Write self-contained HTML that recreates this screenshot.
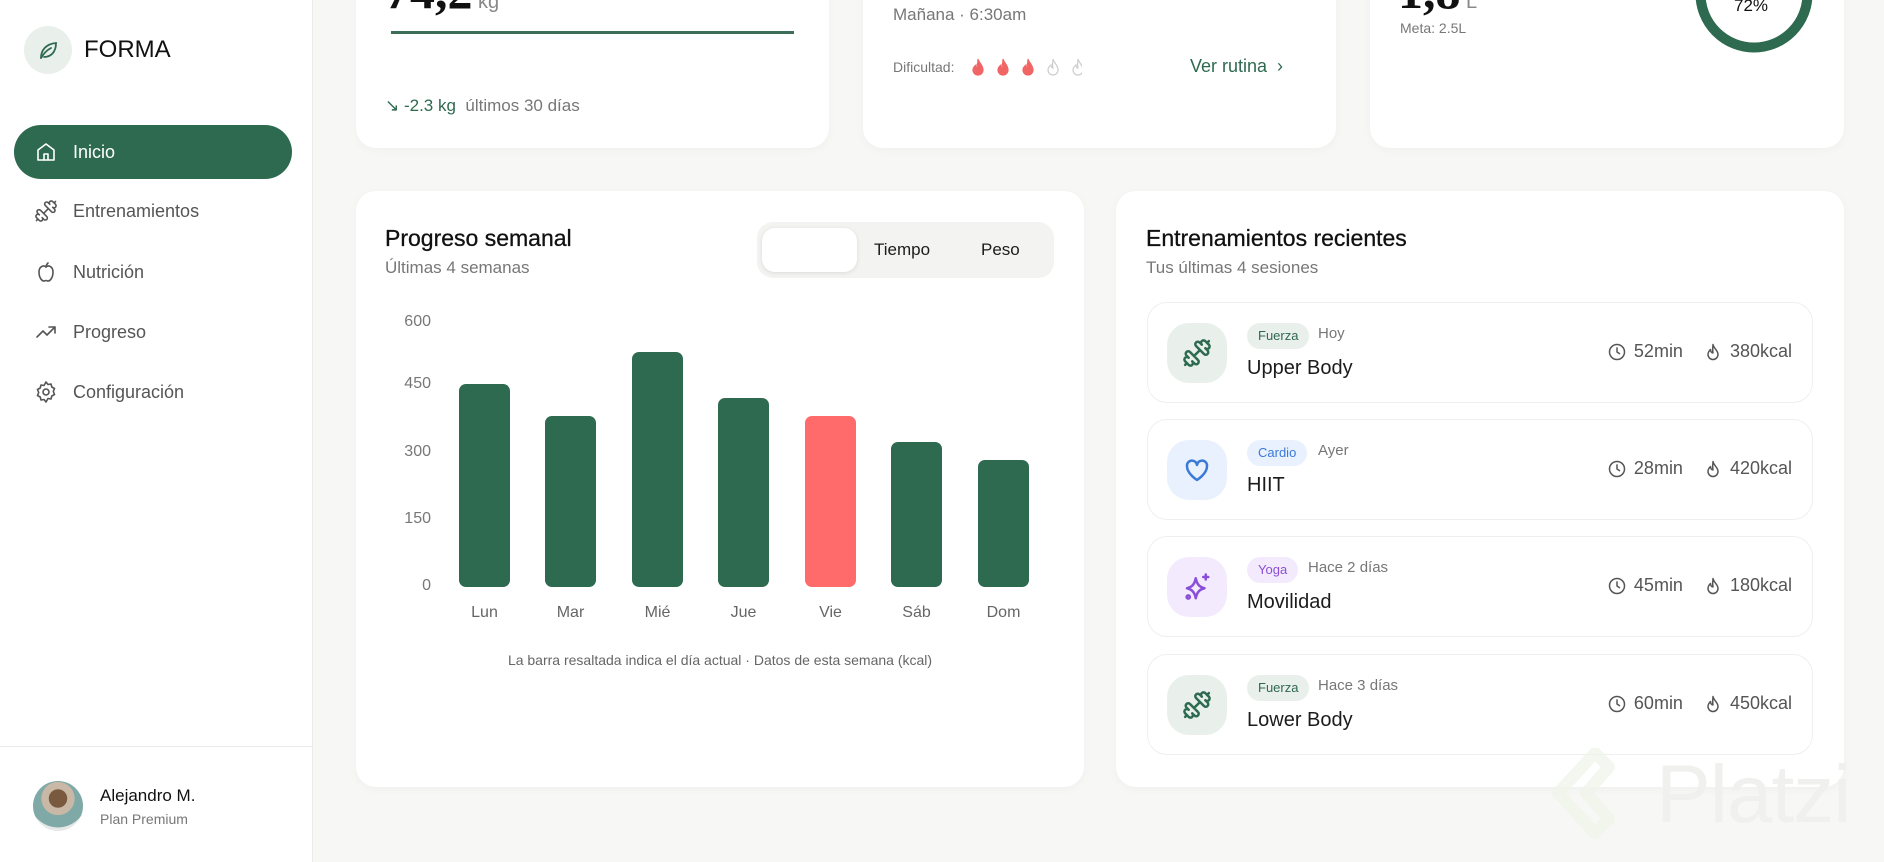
<!DOCTYPE html>
<html><head><meta charset="utf-8">
<style>
*{box-sizing:border-box;margin:0;padding:0}
body{width:1884px;height:862px;overflow:hidden;background:#f7f7f5;font-family:"Liberation Sans",sans-serif;color:#1c1c1c;position:relative}
.a{position:absolute}
.side{left:0;top:0;width:313px;height:862px;background:#fff;border-right:1px solid #ebebea}
.card{background:#fff;border-radius:20px;box-shadow:0 2px 10px rgba(0,0,0,.035)}
.nav{left:14px;width:278px;height:54px;border-radius:27px;display:flex;align-items:center;padding-left:20px;font-size:18px;color:#555}
.nav svg{width:24px;height:24px;margin-right:15px;fill:none;stroke:currentColor;stroke-width:1.6;stroke-linecap:round;stroke-linejoin:round}
.fl{transform:scaleX(-1)}
.grey{color:#777}
.bar{position:absolute;width:51px;bottom:275px;background:#2e6a50;border-radius:7px}
.yl{position:absolute;left:380px;width:51px;text-align:right;font-size:16px;color:#777}
.xl{position:absolute;top:604px;width:51px;text-align:center;font-size:16px;color:#666}
.row{position:absolute;left:1147px;width:666px;height:101px;border:1px solid #efefed;border-radius:20px;background:#fff}
.ic{position:absolute;left:19px;top:20px;width:60px;height:60px;border-radius:22px;display:flex;align-items:center;justify-content:center}
.ic svg{width:30px;height:30px;fill:none;stroke-width:2;stroke-linecap:round;stroke-linejoin:round}
.tag{position:absolute;left:99px;top:20px;height:26px;padding:0 11px;border-radius:13px;font-size:13px;line-height:26px}
.when{position:absolute;top:22px;font-size:15px;color:#777}
.tt{position:absolute;left:99px;top:54px;font-size:20px;color:#1c1c1c}
.st{position:absolute;top:38px;right:20px;font-size:18px;color:#555;display:flex;align-items:center}
.st svg{width:20px;height:20px;fill:none;stroke:#555;stroke-width:1.8;stroke-linecap:round;stroke-linejoin:round;margin-right:7px}
</style></head><body>
<div class="a side"></div>
<div class="a" style="left:24px;top:26px;width:48px;height:48px;border-radius:50%;background:#e9efeb"></div>
<svg class="a" style="left:36px;top:38px" width="24" height="24" viewBox="0 0 24 24" fill="none" stroke="#2e6a50" stroke-width="1.8" stroke-linecap="round"><path d="M5 20c0-8 5-14 15-15 0 9-5 14-12 14"/><path d="M5 20c3-5 6-8 10-10"/></svg>
<div class="a" style="left:84px;top:36px;font-size:24px;font-weight:500;color:#111">FORMA</div>

<div class="a nav" style="top:125px;background:#2e6a50;color:#fff"><svg viewBox="0 0 24 24"><path d="M4 10l8-6 8 6v10H4z"/><path d="M10 20v-6h4v6"/></svg>Inicio</div>
<div class="a nav" style="top:184px"><svg class="fl" viewBox="0 0 24 24"><path d="M14.4 14.4 9.6 9.6M18.657 21.485a2 2 0 1 1-2.829-2.828l-1.767 1.768a2 2 0 1 1-2.829-2.829l6.364-6.364a2 2 0 1 1 2.829 2.829l-1.768 1.767a2 2 0 1 1 2.828 2.829zM21.5 21.5l-1.4-1.4M3.9 3.9 2.5 2.5M6.404 12.768a2 2 0 1 1-2.829-2.829l1.768-1.767a2 2 0 1 1-2.828-2.829l2.828-2.828a2 2 0 1 1 2.829 2.828l1.767-1.768a2 2 0 1 1 2.829 2.829z"/></svg>Entrenamientos</div>
<div class="a nav" style="top:245px"><svg viewBox="0 0 24 24"><path d="M12 7c-2-2-7-1-7 5s3 9 5 9c1 0 1-.5 2-.5s1 .5 2 .5c2 0 5-3 5-9s-5-7-7-5z"/><path d="M12 7c0-2 1-3 2-4"/></svg>Nutrición</div>
<div class="a nav" style="top:305px"><svg viewBox="0 0 24 24"><path d="M3 17l6-6 4 4 8-8M15 7h6v6"/></svg>Progreso</div>
<div class="a nav" style="top:365px"><svg viewBox="0 0 24 24"><circle cx="12" cy="12" r="3"/><path d="M12 2l2 2.5 3-.5.8 3 2.7 1.5-1.2 3 1.2 3-2.7 1.5-.8 3-3-.5L12 22l-2-2.5-3 .5-.8-3-2.7-1.5 1.2-3-1.2-3 2.7-1.5.8-3 3 .5z"/></svg>Configuración</div>

<div class="a" style="left:0;top:746px;width:312px;height:1px;background:#ebebea"></div>
<div class="a" style="left:33px;top:781px;width:50px;height:50px;border-radius:50%;background:radial-gradient(circle at 50% 35%,#7a5a3e 0 22%,#c9b8a6 23% 40%,#7fa9a6 41% 70%,#e6e8e8 71%)"></div>
<div class="a" style="left:100px;top:786px;font-size:17px;color:#111">Alejandro M.</div>
<div class="a grey" style="left:100px;top:811px;font-size:14px">Plan Premium</div>

<div class="a card" style="left:356px;top:-30px;width:473px;height:178px"></div>
<div class="a" style="left:385px;top:-38px;font-family:'Liberation Serif',serif;font-size:50px;font-weight:bold;color:#111">74,2<span style="font-size:20px;font-weight:normal;color:#888;font-family:'Liberation Sans'"> kg</span></div>
<div class="a" style="left:391px;top:31px;width:403px;height:3px;background:#3d6e58"></div>
<div class="a" style="left:385px;top:96px;font-size:17px;color:#2e6a50">↘ -2.3 kg <span style="color:#777">&nbsp;últimos 30 días</span></div>

<div class="a card" style="left:863px;top:-30px;width:473px;height:178px"></div>
<div class="a grey" style="left:893px;top:5px;font-size:17px">Mañana · 6:30am</div>
<div class="a grey" style="left:893px;top:59px;font-size:14px">Dificultad:</div>
<svg class="a" style="left:972px;top:56px" width="110" height="22" viewBox="0 0 110 22"><g stroke-width="1.2"><path d="M6 3c1 4 5 6 5 11a5 5 0 0 1-10 0c0-3 2-4 3-5 0 2 1 3 2 3-1-3 0-6 0-9z" fill="#f06565" stroke="#f06565"/><path transform="translate(25 0)" d="M6 3c1 4 5 6 5 11a5 5 0 0 1-10 0c0-3 2-4 3-5 0 2 1 3 2 3-1-3 0-6 0-9z" fill="#f06565" stroke="#f06565"/><path transform="translate(50 0)" d="M6 3c1 4 5 6 5 11a5 5 0 0 1-10 0c0-3 2-4 3-5 0 2 1 3 2 3-1-3 0-6 0-9z" fill="#f06565" stroke="#f06565"/><path transform="translate(75 0)" d="M6 3c1 4 5 6 5 11a5 5 0 0 1-10 0c0-3 2-4 3-5 0 2 1 3 2 3-1-3 0-6 0-9z" fill="none" stroke="#ccc"/><path transform="translate(100 0)" d="M6 3c1 4 5 6 5 11a5 5 0 0 1-10 0c0-3 2-4 3-5 0 2 1 3 2 3-1-3 0-6 0-9z" fill="none" stroke="#ccc"/></g></svg>
<div class="a" style="left:1190px;top:56px;font-size:18px;color:#2e6a50">Ver rutina &nbsp;›</div>

<div class="a card" style="left:1370px;top:-30px;width:474px;height:178px"></div>
<div class="a" style="left:1398px;top:-38px;font-family:'Liberation Serif',serif;font-size:50px;font-weight:bold;color:#111">1,8<span style="font-size:20px;font-weight:normal;color:#888;font-family:'Liberation Sans'"> L</span></div>
<div class="a grey" style="left:1400px;top:20px;font-size:14px">Meta: 2.5L</div>
<svg class="a" style="left:1690px;top:-70px" width="128" height="128"><circle cx="64" cy="64" r="53.5" fill="none" stroke="#2e6a50" stroke-width="10"/></svg>
<div class="a" style="left:1734px;top:-4px;font-size:17px;font-weight:500;color:#111">72%</div>

<div class="a card" style="left:356px;top:191px;width:728px;height:596px"></div>
<div class="a" style="left:385px;top:225px;font-size:23px;color:#111;-webkit-text-stroke:.3px #111">Progreso semanal</div>
<div class="a grey" style="left:385px;top:258px;font-size:17px">Últimas 4 semanas</div>
<div class="a" style="left:757px;top:222px;width:297px;height:56px;border-radius:16px;background:#f3f3f1"></div>
<div class="a" style="left:762px;top:228px;width:95px;height:44px;border-radius:13px;background:#fff;box-shadow:0 1px 4px rgba(0,0,0,.1)"></div>
<div class="a" style="left:874px;top:240px;font-size:17px">Tiempo</div>
<div class="a" style="left:981px;top:240px;font-size:17px">Peso</div>
<div class="yl" style="top:313px">600</div>
<div class="yl" style="top:375px">450</div>
<div class="yl" style="top:443px">300</div>
<div class="yl" style="top:510px">150</div>
<div class="yl" style="top:577px">0</div>
<div class="bar" style="left:459px;height:203px"></div>
<div class="bar" style="left:545px;height:171px"></div>
<div class="bar" style="left:632px;height:235px"></div>
<div class="bar" style="left:718px;height:189px"></div>
<div class="bar" style="left:805px;height:171px;background:#ff6b6b"></div>
<div class="bar" style="left:891px;height:145px"></div>
<div class="bar" style="left:978px;height:127px"></div>
<div class="xl" style="left:459px">Lun</div>
<div class="xl" style="left:545px">Mar</div>
<div class="xl" style="left:632px">Mié</div>
<div class="xl" style="left:718px">Jue</div>
<div class="xl" style="left:805px">Vie</div>
<div class="xl" style="left:891px">Sáb</div>
<div class="xl" style="left:978px">Dom</div>
<div class="a" style="left:356px;width:728px;top:652px;text-align:center;font-size:14px;color:#666">La barra resaltada indica el día actual · Datos de esta semana (kcal)</div>

<div class="a card" style="left:1116px;top:191px;width:728px;height:596px"></div>
<div class="a" style="left:1146px;top:225px;font-size:23px;color:#111;-webkit-text-stroke:.3px #111">Entrenamientos recientes</div>
<div class="a grey" style="left:1146px;top:258px;font-size:17px">Tus últimas 4 sesiones</div>

<div class="row" style="top:302px">
<div class="ic" style="background:#e9efeb"><svg class="fl" viewBox="0 0 24 24" stroke="#2e6a50"><path d="M14.4 14.4 9.6 9.6M18.657 21.485a2 2 0 1 1-2.829-2.828l-1.767 1.768a2 2 0 1 1-2.829-2.829l6.364-6.364a2 2 0 1 1 2.829 2.829l-1.768 1.767a2 2 0 1 1 2.828 2.829zM21.5 21.5l-1.4-1.4M3.9 3.9 2.5 2.5M6.404 12.768a2 2 0 1 1-2.829-2.829l1.768-1.767a2 2 0 1 1-2.828-2.829l2.828-2.828a2 2 0 1 1 2.829 2.828l1.767-1.768a2 2 0 1 1 2.829 2.829z"/></svg></div>
<div class="tag" style="background:#e9efeb;color:#2e6a50">Fuerza</div><div class="when" style="left:170px">Hoy</div>
<div class="tt">Upper Body</div>
<div class="st"><svg viewBox="0 0 24 24"><circle cx="12" cy="12" r="9"/><path d="M12 7v5l3 2"/></svg>52min&nbsp;&nbsp;&nbsp;&nbsp;<svg viewBox="0 0 24 24"><path d="M12 3c1 5 6 7 6 12a6 6 0 0 1-12 0c0-3 2-5 3-6 0 2 1 4 3 4-1-4 0-7 0-10z"/></svg>380kcal</div>
</div>
<div class="row" style="top:419px">
<div class="ic" style="background:#e8f1fd"><svg viewBox="0 0 24 24" stroke="#3b7ad9"><path d="M12 20s-8-5-8-11a4 4 0 0 1 8-1 4 4 0 0 1 8 1c0 6-8 11-8 11z"/></svg></div>
<div class="tag" style="background:#e8f1fd;color:#3b7ad9">Cardio</div><div class="when" style="left:170px">Ayer</div>
<div class="tt">HIIT</div>
<div class="st"><svg viewBox="0 0 24 24"><circle cx="12" cy="12" r="9"/><path d="M12 7v5l3 2"/></svg>28min&nbsp;&nbsp;&nbsp;&nbsp;<svg viewBox="0 0 24 24"><path d="M12 3c1 5 6 7 6 12a6 6 0 0 1-12 0c0-3 2-5 3-6 0 2 1 4 3 4-1-4 0-7 0-10z"/></svg>420kcal</div>
</div>
<div class="row" style="top:536px">
<div class="ic" style="background:#f3ebfd"><svg viewBox="0 0 24 24" stroke="#8a4fd8"><path d="M11 5c1 5 3 7 7 8-4 1-6 3-7 8-1-5-3-7-7-8 4-1 6-3 7-8z"/><path d="M19 2v4M17 4h4"/><circle cx="5" cy="20" r="1.3"/></svg></div>
<div class="tag" style="background:#f3ebfd;color:#8a4fd8">Yoga</div><div class="when" style="left:160px">Hace 2 días</div>
<div class="tt">Movilidad</div>
<div class="st"><svg viewBox="0 0 24 24"><circle cx="12" cy="12" r="9"/><path d="M12 7v5l3 2"/></svg>45min&nbsp;&nbsp;&nbsp;&nbsp;<svg viewBox="0 0 24 24"><path d="M12 3c1 5 6 7 6 12a6 6 0 0 1-12 0c0-3 2-5 3-6 0 2 1 4 3 4-1-4 0-7 0-10z"/></svg>180kcal</div>
</div>
<div class="row" style="top:654px">
<div class="ic" style="background:#e9efeb"><svg class="fl" viewBox="0 0 24 24" stroke="#2e6a50"><path d="M14.4 14.4 9.6 9.6M18.657 21.485a2 2 0 1 1-2.829-2.828l-1.767 1.768a2 2 0 1 1-2.829-2.829l6.364-6.364a2 2 0 1 1 2.829 2.829l-1.768 1.767a2 2 0 1 1 2.828 2.829zM21.5 21.5l-1.4-1.4M3.9 3.9 2.5 2.5M6.404 12.768a2 2 0 1 1-2.829-2.829l1.768-1.767a2 2 0 1 1-2.828-2.829l2.828-2.828a2 2 0 1 1 2.829 2.828l1.767-1.768a2 2 0 1 1 2.829 2.829z"/></svg></div>
<div class="tag" style="background:#e9efeb;color:#2e6a50">Fuerza</div><div class="when" style="left:170px">Hace 3 días</div>
<div class="tt">Lower Body</div>
<div class="st"><svg viewBox="0 0 24 24"><circle cx="12" cy="12" r="9"/><path d="M12 7v5l3 2"/></svg>60min&nbsp;&nbsp;&nbsp;&nbsp;<svg viewBox="0 0 24 24"><path d="M12 3c1 5 6 7 6 12a6 6 0 0 1-12 0c0-3 2-5 3-6 0 2 1 4 3 4-1-4 0-7 0-10z"/></svg>450kcal</div>
</div>

<svg class="a" style="left:1550px;top:748px" width="90" height="100" viewBox="0 0 90 100"><path d="M45 5L8 45l37 40 14-14-23-26 23-26z" fill="none" stroke="#eef3e8" stroke-width="12" stroke-linejoin="round" opacity=".7"/></svg>
<div class="a" style="left:1656px;top:748px;font-size:82px;color:#f0f0ef;letter-spacing:-1px">Platzi</div>
</body></html>
